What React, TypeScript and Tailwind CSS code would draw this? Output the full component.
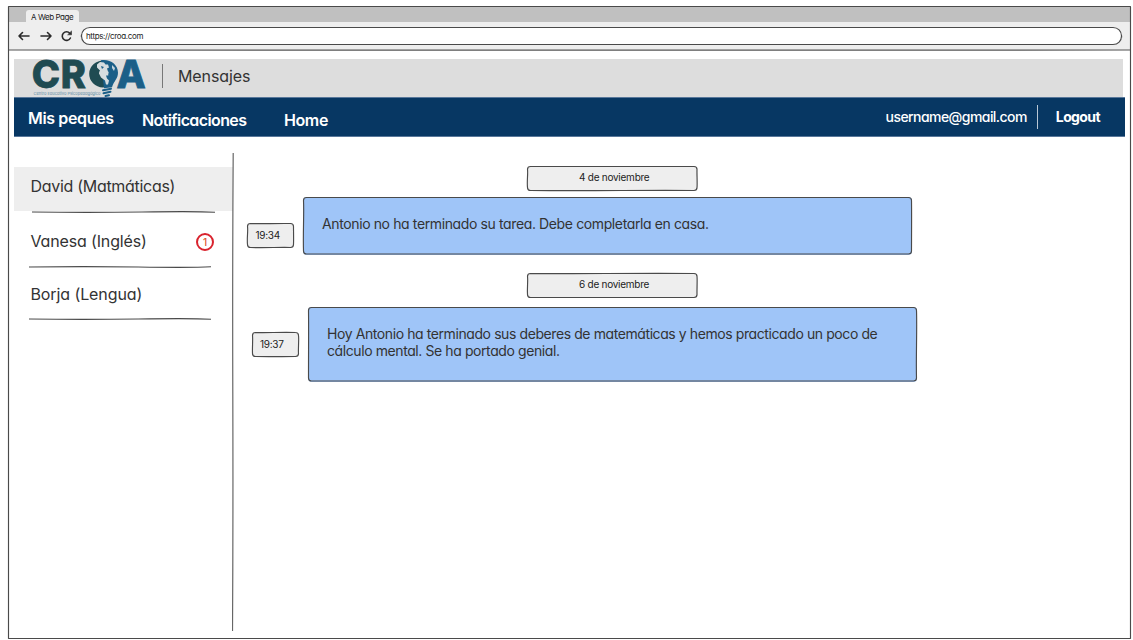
import type { ReactNode } from "react";

type FrameProps = { w: number; h: number; r?: number; seed: number; color?: string };

/** Hand-drawn outline laid over its (relative) parent. */
function SketchFrame({ w, h, r = 3.5, seed, color = "#4a4a4a" }: FrameProps) {
  const j = (n: number) => Math.sin(seed * 12.9 + n * 78.2) * 0.7;
  const k = r * 0.45;
  const R = w - 0.5;
  const B = h - 0.5;
  const d = [
    `M${r},0.5`,
    `C${w * 0.3},${0.5 + j(2)} ${w * 0.6},${0.5 + j(3)} ${w - r},0.5`,
    `C${w - k},0.5 ${R},${k} ${R},${r}`,
    `C${R + j(4)},${h * 0.3} ${R + j(5)},${h * 0.7} ${R},${h - r}`,
    `C${R},${h - k} ${w - k},${B} ${w - r},${B}`,
    `C${w * 0.7},${B + j(6)} ${w * 0.4},${B + j(7)} ${r},${B}`,
    `C${k},${B} 0.5,${h - k} 0.5,${h - r}`,
    `C${0.5 + j(8)},${h * 0.6} ${0.5 + j(9)},${h * 0.3} 0.5,${r}`,
    `C0.5,${k} ${k},0.5 ${r},0.5`,
  ].join(" ");
  return (
    <svg className="pointer-events-none absolute inset-0 overflow-visible" width={w} height={h} fill="none">
      <path d={d} stroke={color} strokeWidth="1.15" />
    </svg>
  );
}

function Logo() {
  return (
    <svg width="116" height="40" viewBox="32 58 116 40" className="relative z-10 -mt-px ml-[18px] shrink-0 overflow-visible">
      <g fontFamily="Inter, sans-serif" fontWeight="800" fontSize="38" strokeWidth="0.8">
        <text x="31.8" y="88.4" fill="#1f4b52" stroke="#1f4b52">C</text>
        <text x="60.8" y="88.4" fill="#1f4b52" stroke="#1f4b52">R</text>
        <text x="116.6" y="88.4" fill="#1b5f88" stroke="#1b5f88">A</text>
      </g>
      <path d="M104 60.500a14.300 13.500 0 0 0-1 27l4-1-3-11-5-2 2-6z" fill="#1f4b52" />
      <path d="M101 60.300c9-1.500 17 4 17 12.500 0 6-4 8-6 14.500l-8 1-1-8 3-7-5-5z" fill="#1b5f88" />
      <path
        d="M97 64.500l3-2.500 4 .5 1.500 2 2.500 0 1 3-2 1 1 3 2 1-1 3-3 0 1 3 2 2-1 4-2 0-1-4-4-3-2-4 1-3-3-3z"
        fill="#d6dde0"
      />
      <path d="M108 62l4 3-2 1zM109 70l3 1-1 4-3 1zM101 66l3 1-2 2z" fill="#1b5f88" />
      <path d="M112 65l3 3-1 3-2-3z" fill="#c4d4dd" />
      <g stroke="#1b5f88" strokeWidth="2" strokeLinecap="round">
        <path d="M103 90.300l8-1.500M103.500 93.200l7-1.400M105.500 96l3.500-.8" />
      </g>
      <text x="33.500" y="94.500" fontFamily="Inter, sans-serif" fontSize="3.800" fill="#5d8ba6" textLength="67" lengthAdjust="spacingAndGlyphs">
        Centro Educativo Psicopedagógico
      </text>
    </svg>
  );
}

function BrowserChrome() {
  return (
    <div className="shrink-0">
      <div className="flex h-4 bg-[#c0c0c0] pt-1 pl-[18px]">
        <div className="h-3 w-[53px] rounded-t-[3px] bg-[#eee] pt-0.5 pl-[5px] text-[8px] leading-[10px] tracking-[-0.43px] whitespace-nowrap text-[#222]">
          A Web Page
        </div>
      </div>
      <div className="relative flex h-7 items-center bg-[#eee] pl-[9px]">
        <svg width="58" height="14" viewBox="0 0 58 14" fill="none" stroke="#2b2b2b" strokeWidth="1.600" strokeLinecap="round" strokeLinejoin="round">
          <path d="M12 7H2M5.500 3.500L2 7l3.500 3.500M24 7h10M30.500 3.500L34 7l-3.500 3.500" />
          <path d="M52.800 4.200a4.300 4.300 0 1 0 .6 4.800" />
          <path d="M54.500 2.300v3.500h-3.500z" fill="#2b2b2b" strokeWidth=".6" />
        </svg>
        <div className="relative ml-1.5 h-[18px] w-[1041px] rounded-full bg-white pt-1 pl-[5px] text-[8px] leading-[10px] tracking-[-0.36px] text-[#222]">
          https://croa.com
          <SketchFrame w={1041} h={18} r={9} seed={2} />
        </div>
        <svg className="absolute bottom-[-1px] left-0" width="1123" height="2" fill="none">
          <path d="M0 1Q200 .4 480 1.200T1123 1" stroke="#555" strokeWidth="1.200" />
        </svg>
      </div>
    </div>
  );
}

function Header() {
  return (
    <header className="flex h-[38px] w-[1109px] shrink-0 bg-[#ddd]">
      <Logo />
      <div className="mt-[5px] ml-[14px] h-6 w-px bg-[#777]" />
      <h1 className="mt-[7px] ml-[15px] text-base leading-5 tracking-[-0.1px]">Mensajes</h1>
    </header>
  );
}

function NavBar() {
  return (
    <nav className="flex h-10 w-[1111px] shrink-0 border-y border-[#58779a] bg-[#073763] font-semibold text-white">
      <a className="mt-[10px] ml-[14px] w-[114px] text-base leading-5 tracking-[-0.35px]">Mis peques</a>
      <a className="mt-3 w-[142px] text-base leading-5 tracking-[-0.6px]">Notificaciones</a>
      <a className="mt-3 text-base leading-5 tracking-[-0.4px]">Home</a>
      <span className="mt-[10px] ml-auto text-sm leading-[17px] font-medium tracking-[-0.56px]">username@gmail.com</span>
      <div className="mt-[7px] ml-[10px] h-6 w-px bg-[#b9c7d5]" />
      <a className="mt-[10px] mr-[25px] ml-[18px] text-sm leading-[17px] font-bold tracking-[-0.6px]">Logout</a>
    </nav>
  );
}

function Divider({ width, bend }: { width: number; bend: number }) {
  return (
    <svg width={width} height="2" className="block overflow-visible" fill="none">
      <path d={`M0 1Q${width * 0.3} ${1 + bend} ${width * 0.6} 1T${width} ${1 + bend * 0.3}`} stroke="#4a4a4a" strokeWidth="1.200" />
    </svg>
  );
}

function Sidebar() {
  return (
    <aside className="relative w-[220px] shrink-0 text-base leading-5 whitespace-nowrap">
      <div className="mt-[30px] h-[44px] w-[219px] bg-[#eee] pt-[9px] pl-[16.5px] tracking-[-0.3px]">David (Matmáticas)</div>
      <div className="ml-[18px]">
        <Divider width={183} bend={0.8} />
      </div>
      <div className="mt-[18px] flex h-5 pl-[16.5px] tracking-[-0.15px]">
        <span className="w-[165.5px]">Vanesa (Inglés)</span>
        <span className="mt-0.5 flex size-[18px] items-center justify-center rounded-full border-2 border-[#d9232e] text-[10px] leading-3 font-medium text-[#e0542e]">1</span>
      </div>
      <div className="mt-[15px] ml-[15px]">
        <Divider width={182} bend={-0.8} />
      </div>
      <div className="mt-4 pl-[16.5px] tracking-[-0.1px]">Borja (Lengua)</div>
      <div className="mt-[14px] ml-[15px]">
        <Divider width={182} bend={0.8} />
      </div>
      <svg className="absolute top-4 right-0" width="2" height="478" fill="none">
        <path d="M1.200 0Q.4 120 .8 240T.5 478" stroke="#666" strokeWidth="1.200" />
      </svg>
    </aside>
  );
}

function DateTag({ children, seed }: { children: ReactNode; seed: number }) {
  return (
    <div className="relative ml-[293px] h-[25px] w-[170.5px] rounded-[4px] bg-[#eee] pt-[5px] pl-[52px] text-[10px] leading-3 tracking-[-0.25px] text-[#222]">
      {children}
      <SketchFrame w={170.5} h={25} seed={seed} />
    </div>
  );
}

function TimeTag({ children, seed }: { children: ReactNode; seed: number }) {
  return (
    <div className="relative h-[25px] w-[47px] shrink-0 rounded-[4px] bg-[#eee] pt-1.5 pl-[8.5px] text-[10px] leading-3 tracking-[-0.3px] text-[#222]">
      {children}
      <SketchFrame w={47} h={25} seed={seed} />
    </div>
  );
}

function Messages() {
  return (
    <main className="pt-[29px]">
      <DateTag seed={3}>4 de noviembre</DateTag>
      <div className="mt-1.5 flex pl-[13px]">
        <div className="mt-[26px]">
          <TimeTag seed={4}>19:34</TimeTag>
        </div>
        <div className="relative ml-[9px] h-[57.5px] w-[609px] rounded-[4px] bg-[#9fc5f8] pt-[18px] pl-[19px] text-sm leading-[17px] tracking-[-0.38px]">
          Antonio no ha terminado su tarea. Debe completarla en casa.
          <SketchFrame w={609} h={57.5} seed={5} />
        </div>
      </div>
      <div className="mt-[18.5px]">
        <DateTag seed={6}>6 de noviembre</DateTag>
      </div>
      <div className="mt-[9px] flex pl-[17.5px]">
        <div className="mt-[25px]">
          <TimeTag seed={7}>19:37</TimeTag>
        </div>
        <div className="relative ml-[9px] h-[74.5px] w-[609px] rounded-[4px] bg-[#9fc5f8] pt-[18px] pl-[19.5px] text-sm leading-[17px] tracking-[-0.41px] whitespace-nowrap">
          Hoy Antonio ha terminado sus deberes de matemáticas y hemos practicado un poco de
          <br />
          cálculo mental. Se ha portado genial.
          <SketchFrame w={609} h={74.5} seed={8} />
        </div>
      </div>
    </main>
  );
}

export default function App() {
  return (
    <div className="h-[640px] w-[1133px] overflow-hidden bg-white pt-1.5 pl-2 font-['Inter',sans-serif] text-[#333] [font-feature-settings:'cv11']">
      <div className="relative flex h-[633px] w-[1123px] flex-col">
        <BrowserChrome />
        <div className="flex grow flex-col pt-[9px] pl-1.5">
          <Header />
          <NavBar />
          <div className="flex grow">
            <Sidebar />
            <Messages />
          </div>
        </div>
        <SketchFrame w={1123} h={633} r={1} seed={1} />
      </div>
    </div>
  );
}
